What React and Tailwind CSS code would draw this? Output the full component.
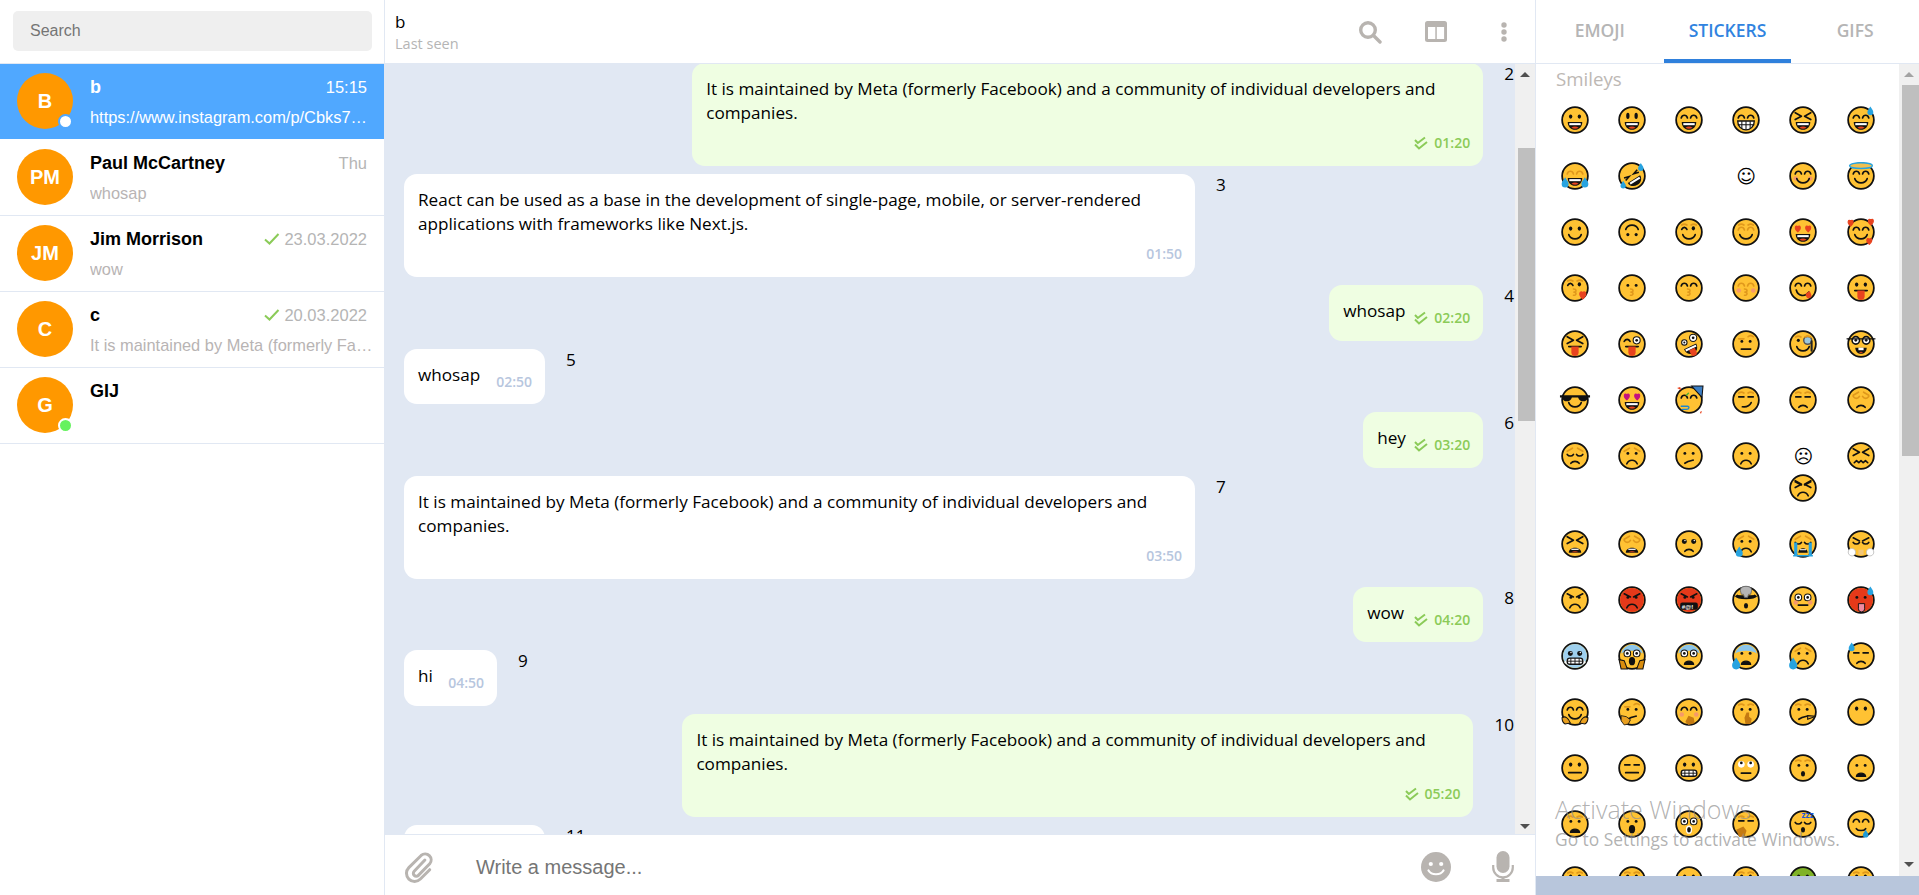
/**
 * Chat layout with sidebar, message list and sticker panel
 */

const L = (d, c = '#111', w = 1.6, fill = 'none') => (
  <path d={d} stroke={c} strokeWidth={w} fill={fill} strokeLinecap="round" strokeLinejoin="round" />
);
const AMBER = '#e0981c';
const RED = '#e8431f';
const BLUE = '#27a3e0';

const heart = (x, y, s = 1, c = RED) => (
  <path transform={`translate(${x} ${y}) scale(${s})`} d="M0 3C-4-.5-1.5-3.5 0-1.2 1.5-3.5 4-.5 0 3z" fill={c} stroke={c} strokeWidth="1" />
);
const drop = (x, y, s = 1, c = BLUE) => (
  <path transform={`translate(${x} ${y}) scale(${s})`} d="M0-4C1.5-1.5 2.6-.5 2.6 1A2.6 2.6 0 0 1-2.6 1C-2.6-.5-1.5-1.5 0-4z" fill={c} />
);

const PARTS = {
  dot: <><ellipse cx="9.3" cy="10.2" rx="1.6" ry="2" fill="#111" /><ellipse cx="17.7" cy="10.2" rx="1.6" ry="2" fill="#111" /></>,
  dotSmall: <><circle cx="9.5" cy="11" r="1.4" fill="#111" /><circle cx="17.5" cy="11" r="1.4" fill="#111" /></>,
  tall: <><ellipse cx="9.5" cy="9.5" rx="1.6" ry="3.1" fill="#111" /><ellipse cx="17.5" cy="9.5" rx="1.6" ry="3.1" fill="#111" /></>,
  arc: L('M6 11.5c1-3.4 5-3.4 6 0M15 11.5c1-3.4 5-3.4 6 0'),
  arcA: L('M6 11.5c1-3.4 5-3.4 6 0M15 11.5c1-3.4 5-3.4 6 0', AMBER),
  down: L('M6 10c1.5 2.6 4.5 2.6 6 0M15 10c1.5 2.6 4.5 2.6 6 0', AMBER),
  downB: L('M6 12c1.5 2 4.5 2 6 0M15 12c1.5 2 4.5 2 6 0'),
  x: L('M6 6.5l6 3.3-6 3.3M21 6.5l-6 3.3 6 3.3'),
  line: L('M6.5 10.5h5M15.5 10.5h5'),
  wink: <><ellipse cx="17.7" cy="10" rx="1.6" ry="2" fill="#111" />{L('M6.5 11c1.2-2.6 3.8-2.6 5 0')}</>,
  winkB: <><circle cx="18" cy="10" r="3.4" fill="#fff" stroke="#111" /><circle cx="18" cy="10" r="1.3" fill="#111" />{L('M6 11c1.4-2.6 4.2-2.6 5.6 0')}</>,
  wide: <><circle cx="9" cy="11" r="3.2" fill="#fff" stroke="#111" /><circle cx="18" cy="11" r="3.2" fill="#fff" stroke="#111" /><circle cx="9" cy="11" r="1.3" fill="#111" /><circle cx="18" cy="11" r="1.3" fill="#111" /></>,
  roll: <><circle cx="9" cy="10" r="3.2" fill="#fff" /><circle cx="18" cy="10" r="3.2" fill="#fff" /><circle cx="9" cy="8.6" r="1.3" fill="#111" /><circle cx="18" cy="8.6" r="1.3" fill="#111" /></>,
  big: <><circle cx="9" cy="11" r="2.4" fill="#111" /><circle cx="18" cy="11" r="2.4" fill="#111" /><circle cx="9.6" cy="10.2" r=".7" fill="#fff" /><circle cx="18.6" cy="10.2" r=".7" fill="#fff" /></>,
  heartEyes: <>{heart(8.5, 10, 1.1)}{heart(18.5, 10, 1.1)}</>,
  starEyes: <>{heart(8.5, 10, 1.1, '#c4127f')}{heart(18.5, 10, 1.1, '#c4127f')}</>,
  glasses: <><circle cx="8.5" cy="10" r="3.6" fill="#fff" stroke="#111" strokeWidth="1.5" /><circle cx="18.5" cy="10" r="3.6" fill="#fff" stroke="#111" strokeWidth="1.5" /><circle cx="8.5" cy="10" r="1.3" fill="#111" /><circle cx="18.5" cy="10" r="1.3" fill="#111" />{L('M0 8.5h27', '#111', 1.2)}</>,
  shades: <path d="M-1 9h29v2h-2c-1 5-8 5-9.5 0h-6c-1.500 5-8.500 5-9.500 0h-2z" fill="#111" />,
  mono: <><circle cx="18" cy="10" r="3.8" fill="#9cc8dc" stroke="#555" strokeWidth="1.4" /><circle cx="9" cy="10" r="1.5" fill="#111" />{L('M21.800 11v9', '#222', 2)}</>,

  open: <><path d="M6.500 15.500h14c0 4.500-3 7.500-7 7.500s-7-3-7-7.500z" fill="#111" /><path d="M8 16.500h11v2H8z" fill="#fff" /><path d="M10 21c2-1.500 5-1.500 7 0-2 1.200-5 1.200-7 0z" fill={RED} /></>,
  teeth: <><path d="M5.500 14.500h16c0 5-3.500 8.500-8 8.500s-8-3.500-8-8.500z" fill="#fff" stroke="#111" strokeWidth="1.3" />{L('M6 18h15M9.500 15v6.500M13.500 15v7.500M17.500 15v6.500', '#111', 1)}</>,
  grit: <><rect x="6" y="15.500" width="15" height="6" rx="2.500" fill="#fff" stroke="#111" strokeWidth="1.3" />{L('M6 18.500h15M9.500 16v5M13.500 16v5M17.500 16v5', '#111', .9)}</>,
  smile: L('M7.500 16c2 5.500 10 5.500 12 0'),
  smileS: L('M9 18c1.800 2.400 7.200 2.400 9 0'),
  smirk: L('M10 20c4 .5 7-1 8.500-4'),
  frown: L('M8.500 21c2-4.500 8-4.500 10 0'),
  frownS: L('M9.500 20.500c1.800-2.400 6.200-2.400 8 0'),
  flat: L('M9 18.500h9'),
  wide_flat: L('M7.500 18h12', '#111', 1.800),
  slant: L('M9.500 20.500c2.500-2 5.500-2.500 8-3'),
  wavy: L('M7 20l2.200-2 2.200 2 2.100-2 2.100 2 2.200-2 2.200 2'),
  o: <ellipse cx="13.500" cy="19" rx="2" ry="2.600" fill="#111" />,
  oBig: <ellipse cx="13.500" cy="18.500" rx="3" ry="4" fill="#111" />,
  oLips: <><ellipse cx="13.500" cy="19" rx="3" ry="4" fill="#fff" /><ellipse cx="13.500" cy="19" rx="1.800" ry="2.600" fill="#111" /></>,
  anguish: <path d="M9 21.500c1-4 8-4 9 0z" fill="#111" stroke="#111" strokeWidth="1.200" strokeLinejoin="round" />,
  cry: <><path d="M9 22c0-6 9-6 9 0z" fill="#111" /><path d="M10.500 18.500h6v1h-6z" fill="#fff" /></>,
  weary: <><path d="M7.500 22c0-6.500 12-6.500 12 0z" fill="#111" /><path d="M10 18h7v1.200h-7z" fill="#fff" /><path d="M10 21.500c2-1.400 5-1.400 7 0z" fill={RED} /></>,
  tongue: <><path d="M7.500 16h12" stroke="#111" strokeWidth="1.600" strokeLinecap="round" /><path d="M10 16h7v5.500a3.500 3.500 0 0 1-7 0z" fill={RED} /></>,
  lick: <>{L('M7 15.500c1.500 6 8.500 7 12 2')}<path d="M16 19l4-2.500 1.500 3.500a2.500 2.500 0 0 1-5 1.500z" fill={RED} /></>,
  kiss: L('M12 14.500c3.200 0 3.200 3 .5 3 2.700 0 2.700 3-.5 3', AMBER, 1.500),
  browA: L('M6.500 6.800c1.500-1 3.500-1 5 0M15.500 6.800c1.500-1 3.500-1 5 0', AMBER),
  sadBrow: L('M6 9l5-3M21 9l-5-3', AMBER),
  angry: L('M6 7.500l6 3M21 7.500l-6 3'),
  oneBrow: L('M6.500 8.500h5M15.500 6.500c1.500-1.500 4-1.500 5 0', AMBER),
  blush: <><circle cx="6.500" cy="16" r="2.200" fill="#f5996a" /><circle cx="20.500" cy="16" r="2.200" fill="#f5996a" /></>,
  sweat: drop(22.500, 5, 1.100),
  sweatL: drop(4.500, 5, 1.100),
  tears: <>{drop(4, 20, 1.300)}{drop(23, 20, 1.300)}</>,
  tearL: drop(7, 21, 1.300),
  tearBig: drop(4, 21, 1.500),
  streams: <path d="M5 12h3v13H5zM19 12h3v13h-3zM4 24h19v1.500H4z" fill={BLUE} />,
  halo: <ellipse cx="13.500" cy="3.500" rx="11" ry="2.800" fill="#f0c050" stroke={BLUE} strokeWidth="1.300" />,
  hearts3: <>{heart(3.500, 4.500, 1.100)}{heart(23, 3.500, 1.100)}{heart(21.500, 22, 1.100)}</>,
  kissHeart: heart(21, 20, 1.300),
  nerdTeeth: <><path d="M8 17h11c0 3.500-2.500 6-5.500 6S8 20.500 8 17z" fill="#111" /><path d="M11 17h5v2.500h-5z" fill="#fff" /><path d="M11.500 21.500c1.200-.8 2.800-.8 4 0-1.200 1-2.800 1-4 0z" fill={RED} /></>,
  hat: <><path d="M16 0l11 0-1 11z" fill="#3d7fc4" stroke="#111" strokeWidth="1" /><path d="M2 2l3-1 1 3zM24 25l2-1-1 3z" fill={RED} /></>,
  horn: <>{L('M6 19.500h6c2 0 2 3-1 3h-4', '#1f86d0', 1.300)}{L('M11 9l2-2', '#4caf2d', 1.300)}</>,
  red: <circle cx="13.500" cy="13.500" r="11.500" fill="#e5391a" />,
  blue: <circle cx="13.500" cy="13.500" r="11.500" fill="#9ed0ee" />,
  blueTop: <path d="M3 11a10.800 10.800 0 0 1 21 0c-6-3.500-15-3.500-21 0z" fill="#8cc6ea" />,
  snot: <path d="M3 20l4-5 1 8zM24 20l-4-5-1 8z" fill="#fff" />,
  hands: <path d="M1 17l5 1 3 8H3zM26 17l-5 1-3 8h6z" fill="#d98d0e" stroke="#111" strokeWidth="1" />,
  hug: <path d="M1 19c3-2 6 0 8 5l-5 1c-2-1-3-3-3-6zM26 19c-3-2-6 0-8 5l5 1c2-1 3-3 3-6z" fill="#e9a020" stroke="#111" strokeWidth="1" />,
  hand: <path d="M13 17l5 2 1 5-6 2-3-3z" fill="#c47a12" />,
  thinkHand: <path d="M3 17l5 1 4 3-2 4-4 1-3-4z" fill="#e9a020" stroke="#111" strokeWidth=".8" />,
  shush: <path d="M14 14h2.500v4l2.500 2-1 5h-5l-1-6z" fill="#c47a12" />,
  nose: <path d="M18 17l8 .5-8 3z" fill="#f0b030" stroke="#111" strokeWidth="1" />,
  yawnHand: <path d="M4 19l7-3 3 4-2 6H7z" fill="#c47a12" />,
  zzz: <text x="12" y="8" fontSize="8" fontWeight="700" fill="#1a56d6" fontFamily="Liberation Sans">zzz</text>,
  drool: drop(18, 23, 1, '#1f9ad6'),
  steam: <path d="M2 19c2-2 5-1 6 1 1 3-1 5-3 5-3 0-5-3-3-6zM25 19c-2-2-5-1-6 1-1 3 1 5 3 5 3 0 5-3 3-6z" fill="#fff" stroke="#bbb" strokeWidth=".8" />,
  steamM: <path d="M11 19h5v5h-5z" fill="#f3c77a" />,
  grawlix: <><rect x="5" y="16" width="17" height="7" rx="2" fill="#111" /><text x="6.500" y="22" fontSize="6" fontWeight="700" fill="#fff" fontFamily="Liberation Sans">#@!</text></>,
  burst: <><path d="M4 9c2 3 17 3 19 0" fill="#111" stroke="#111" strokeWidth="3" /><path d="M8 4c0-5 11-5 11 0l-1 4h-2l-1 3h-3l-1-3H9z" fill="#b5b5b5" stroke="#666" strokeWidth=".8" /></>,
  hotTongue: <path d="M11 17h6v5a3 3 0 0 1-6 0z" fill="#f08aa0" stroke="#111" strokeWidth=".9" />,
  rofl: <g transform="rotate(-32 13.500 13.500)"><path d="M6 11l5 1.500-5 1.500M21 11l-5 1.500 5 1.500" stroke="#111" strokeWidth="1.500" fill="none" /><path d="M6.500 17h14c0 4-3 6.500-7 6.500s-7-2.500-7-6.500z" fill="#111" /><path d="M8 17.800h11v2H8z" fill="#fff" /></g>,
  roflTears: <>{drop(5, 22, 1)}{drop(22, 5, 1)}</>,
  upside: <g transform="rotate(180 13.500 13.500)">{L('M7.500 16c2 5.500 10 5.500 12 0')}</g>,
  upsideEyes: <><circle cx="9.500" cy="16" r="1.500" fill="#111" /><circle cx="17.500" cy="16" r="1.500" fill="#111" /></>,
  zany: <g transform="rotate(-25 13.500 13.500)"><path d="M7 16h13c0 5-3 7.500-6.500 7.500S7 21 7 16z" fill="#111" /><path d="M8 16.800h11v2H8z" fill="#fff" /><path d="M11 19h6v4a3 3 0 0 1-6 0z" fill={RED} /></g>,
  zanyEyes: <><circle cx="9" cy="12" r="2.600" fill="#fff" stroke="#111" /><circle cx="17.500" cy="7.500" r="3.500" fill="#fff" stroke="#111" /><circle cx="9" cy="12" r="1" fill="#111" /><circle cx="17.500" cy="7.500" r="1.300" fill="#111" /></>,
};

// six per row, the way the panel lays them out; a string is a plain text glyph
const ROWS = [
  [['dot', 'open'], ['tall', 'open'], ['arc', 'open'], ['arc', 'teeth'], ['x', 'open'], ['arc', 'open', 'sweat']],
  [['arcA', 'open', 'tears'], ['rofl', 'roflTears'], null, '☺', ['arc', 'blush', 'smile'], ['halo', 'arc', 'smile']],
  [['dot', 'smile'], ['upsideEyes', 'upside'], ['browA', 'wink', 'smile'], ['arcA', 'browA', 'smile'], ['heartEyes', 'open'], ['arc', 'smile', 'hearts3']],
  [['browA', 'wink', 'kiss', 'kissHeart'], ['dotSmall', 'kiss'], ['arc', 'kiss'], ['arcA', 'blush', 'kiss'], ['arc', 'lick'], ['dot', 'tongue']],
  [['x', 'tongue'], ['winkB', 'tongue'], ['zanyEyes', 'zany'], ['oneBrow', 'dotSmall', 'flat'], ['mono', 'browA', 'smile'], ['glasses', 'nerdTeeth']],
  [['shades', 'smile'], ['starEyes', 'open'], ['arc', 'horn', 'hat'], ['browA', 'line', 'smirk'], ['line', 'browA', 'frownS'], ['sadBrow', 'down', 'frownS']],
  [['sadBrow', 'downB', 'frownS'], ['sadBrow', 'dotSmall', 'frown'], ['dotSmall', 'slant'], ['dotSmall', 'frown'], ['☹', ['x', 'angry', 'frown']], ['x', 'wavy']],
  [['x', 'weary'], ['sadBrow', 'down', 'weary'], ['big', 'frownS'], ['sadBrow', 'dotSmall', 'frown', 'tearL'], ['sadBrow', 'downB', 'cry', 'streams'], ['angry', 'downB', 'steam', 'steamM']],
  [['angry', 'dotSmall', 'frown'], ['red', 'angry', 'dotSmall', 'frown'], ['red', 'angry', 'dotSmall', 'grawlix'], ['burst', 'o'], ['wide', 'blush', 'flat'], ['red', 'dotSmall', 'hotTongue', 'sweat']],
  [['blue', 'big', 'snot', 'grit'], ['blueTop', 'wide', 'hands', 'oBig'], ['blueTop', 'wide', 'anguish'], ['blueTop', 'dotSmall', 'anguish', 'tearBig'], ['sadBrow', 'dotSmall', 'frown', 'tearBig'], ['line', 'frownS', 'sweatL']],
  [['arc', 'smile', 'hug'], ['oneBrow', 'dotSmall', 'slant', 'thinkHand'], ['arc', 'blush', 'hand'], ['browA', 'dotSmall', 'shush'], ['browA', 'dotSmall', 'slant', 'nose'], ['dot']],
  [['dot', 'wide_flat'], ['line', 'wide_flat'], ['dot', 'grit'], ['roll', 'flat'], ['browA', 'dotSmall', 'o'], ['dotSmall', 'anguish']],
  [['browA', 'dotSmall', 'anguish'], ['dotSmall', 'oBig'], ['wide', 'oLips'], ['line', 'browA', 'yawnHand'], ['downB', 'o', 'zzz'], ['arc', 'smileS', 'drool']],
  [['browA', 'dot'], ['browA', 'dot'], ['dot'], ['browA', 'dot'], ['green', 'dot'], ['browA', 'dot']],
];

function Face({ parts }) {
  const green = parts.includes('green');
  return (
    <svg width="28" height="28" viewBox="0 0 27 27" className="overflow-visible">
      <circle cx="13.5" cy="13.5" r="12.4" fill={green ? '#7fb226' : '#ffc233'} stroke="#111" strokeWidth="1.7" />
      {parts.filter((p) => p !== 'green').map((p) => (
        <g key={p}>{PARTS[p]}</g>
      ))}
    </svg>
  );
}

function Sticker({ item }) {
  if (item === null) return <div className="h-8" />;
  if (typeof item === 'string') {
    return (
      <div className="h-8 flex items-center justify-center text-[19px] leading-none text-black font-['DejaVu_Sans',sans-serif]">
        {item}
      </div>
    );
  }
  return (
    <div className="h-8 flex items-center justify-center">
      <Face parts={item} />
    </div>
  );
}

function isDouble(cell) {
  return Array.isArray(cell) && typeof cell[0] === 'string' && cell[0] === '☹';
}

function StickerGrid() {
  return (
    <div className="grid grid-cols-[repeat(6,57.2px)] pl-[10px]">
      {ROWS.flat().map((cell, i) => (
        <div key={i} className="py-3 flex flex-col items-stretch">
          {isDouble(cell) ? (
            <>
              <Sticker item={cell[0]} />
              <Sticker item={cell[1]} />
            </>
          ) : (
            <Sticker item={cell} />
          )}
        </div>
      ))}
    </div>
  );
}

function Arrow({ down, color }) {
  return (
    <svg width="10" height="5" viewBox="0 0 10 5" className="block">
      <path d={down ? 'M0 0h10L5 5z' : 'M5 0l5 5H0z'} fill={color} />
    </svg>
  );
}

function ScrollTrack({ thumbTop, thumbHeight, upColor, bottomPad }) {
  return (
    <div className="w-5 shrink-0 bg-[#f0f0f0] flex flex-col items-center">
      <div className="h-[21px] shrink-0 flex items-center justify-center">
        <Arrow color={upColor} />
      </div>
      <div className="ml-[3px] mr-[1px] w-[17px] bg-[#bfbfbf] shrink-0" style={{ marginTop: thumbTop, height: thumbHeight }} />
      <div className="mt-auto flex justify-center" style={{ paddingBottom: bottomPad }}>
        <Arrow down color="#505050" />
      </div>
    </div>
  );
}

function DoubleCheck({ color = '#8bcb58' }) {
  return (
    <svg width="14" height="14" viewBox="0 0 14 14" fill="none" stroke={color} strokeWidth="2">
      <path d="M1 4l2.800 3L11 1.500" />
      <path d="M1 8.500L5 12.500 13 6" />
    </svg>
  );
}

function Check() {
  return (
    <svg width="16" height="12" viewBox="0 0 16 12" fill="none" stroke="#8bcb58" strokeWidth="2">
      <path d="M1 6.500L5.500 10.500 14.500 1" />
    </svg>
  );
}

function Time({ value, mine }) {
  return (
    <span className={`flex items-center gap-1.5 text-[14px] leading-5 font-semibold ${mine ? 'text-[#8bcb58]' : 'text-[#b7c6de]'}`}>
      {mine && <DoubleCheck />}
      {value}
    </span>
  );
}

const MESSAGES = [
  { n: 2, mine: true, long: 'It is maintained by Meta (formerly Facebook) and a community of individual developers and companies.', time: '01:20' },
  { n: 3, long: 'React can be used as a base in the development of single-page, mobile, or server-rendered applications with frameworks like Next.js.', time: '01:50' },
  { n: 4, mine: true, short: 'whosap', time: '02:20', w: 'w-[154px]' },
  { n: 5, short: 'whosap', time: '02:50', w: 'w-[141px]' },
  { n: 6, mine: true, short: 'hey', time: '03:20', w: 'w-[120px]' },
  { n: 7, long: 'It is maintained by Meta (formerly Facebook) and a community of individual developers and companies.', time: '03:50' },
  { n: 8, mine: true, short: 'wow', time: '04:20', w: 'w-[130px]' },
  { n: 9, short: 'hi', time: '04:50', w: 'w-[93px]' },
  { n: 10, mine: true, long: 'It is maintained by Meta (formerly Facebook) and a community of individual developers and companies.', time: '05:20' },
  { n: 11, short: 'whosap', time: '05:50', w: 'w-[141px]' },
];

function Message({ msg }) {
  const bg = msg.mine ? 'bg-[#effee2]' : 'bg-white';
  return (
    <div className={`flex shrink-0 text-[17.15px] leading-6 text-black ${msg.mine ? 'justify-end pr-px' : 'pl-5'}`}>
      {msg.long ? (
        <div className={`${bg} w-[791px] h-[103px] rounded-[13px] pl-[14px] pr-[13px] pt-[14px] pb-[13px] flex flex-col`}>
          <p>{msg.long}</p>
          <div className="mt-auto flex justify-end">
            <Time value={msg.time} mine={msg.mine} />
          </div>
        </div>
      ) : (
        <div className={`${bg} ${msg.w} h-[55.5px] rounded-[13px] pl-[14px] pr-[13px] pt-[14px] flex justify-between`}>
          <span>{msg.short}</span>
          <span className="mt-[9px]">
            <Time value={msg.time} mine={msg.mine} />
          </span>
        </div>
      )}
      <span className="ml-[21px] -mt-px">{msg.n}</span>
    </div>
  );
}

const CHATS = [
  { initials: 'B', name: 'b', time: '15:15', text: 'https://www.instagram.com/p/Cbks7MkAaHv/?utm_source=ig_web', active: true, dot: 'self' },
  { initials: 'PM', name: 'Paul McCartney', time: 'Thu', text: 'whosap' },
  { initials: 'JM', name: 'Jim Morrison', time: '23.03.2022', text: 'wow', sent: true },
  { initials: 'C', name: 'c', time: '20.03.2022', text: 'It is maintained by Meta (formerly Facebook) and a community', sent: true },
  { initials: 'G', name: 'GIJ', time: '', text: '', dot: 'online' },
];

function ChatRow({ chat }) {
  const active = chat.active;
  return (
    <div className={`h-[76px] flex pl-[17px] pt-[9px] border-b shrink-0 ${active ? 'bg-[#50a8ff] border-white' : 'bg-white border-[#e1e8f3]'}`}>
      <div className="relative w-14 h-14 rounded-full bg-[#ff9800] flex items-center justify-center text-white font-bold text-[20px] shrink-0">
        {chat.initials}
        {chat.dot && (
          <span className={`absolute right-0 bottom-0 w-[15px] h-[15px] rounded-full border-2 ${chat.dot === 'self' ? 'bg-white border-[#50a8ff]' : 'bg-[#66f25f] border-white'}`} />
        )}
      </div>
      <div className="ml-[17px] min-w-0 w-[288px]">
        <div className="flex items-center justify-between pr-[11px] h-7">
          <span className={`font-bold text-[18px] ${active ? 'text-white' : 'text-black'}`}>{chat.name}</span>
          <span className={`flex items-center gap-[4px] text-[16.5px] ${active ? 'text-white' : 'text-[#b5b5b5]'}`}>
            {chat.sent && <Check />}
            {chat.time}
          </span>
        </div>
        <div className={`mt-[4px] text-[16.4px] leading-6 truncate ${active ? 'text-white' : 'text-[#b8b4b4]'}`}>{chat.text}</div>
      </div>
    </div>
  );
}

export default function App() {
  return (
    <div className="relative h-screen w-full flex overflow-hidden bg-white font-['Liberation_Sans',sans-serif]">
      {/* Chats */}
      <aside className="w-[384px] shrink-0 flex flex-col">
        <div className="h-16 shrink-0 pl-[13px] pr-[12px] pt-[11px] border-b border-[#e1e8f3]">
          <div className="h-[40px] rounded-[5px] bg-[#efefef] pl-[17px] flex items-center text-[16px] text-[#757575]">Search</div>
        </div>
        {CHATS.map((chat) => (
          <ChatRow key={chat.initials} chat={chat} />
        ))}
      </aside>

      {/* Conversation */}
      <main className="w-[1152px] shrink-0 flex flex-col font-['Open_Sans',sans-serif]">
        <header className="h-16 shrink-0 border-l border-r border-b border-[#e1e8f3] flex items-center pl-[10px]">
          <div>
            <div className="text-[17px] leading-6 font-medium text-black">b</div>
            <div className="text-[14.5px] leading-5 text-[#b5b5b5]">Last seen</div>
          </div>
          <div className="ml-auto flex items-center">
            <svg width="24" height="24" viewBox="0 0 24 24" fill="none" stroke="#b8b4b0" strokeWidth="3.4" strokeLinecap="round" className="mr-[43px]">
              <circle cx="10" cy="10" r="7.300" />
              <path d="M16 16l6 6" />
            </svg>
            <svg width="22" height="21" viewBox="0 0 22 21" className="mr-[54px]">
              <rect width="22" height="21" rx="2.500" fill="#b8b4b0" />
              <rect x="3" y="6" width="7.300" height="12" fill="#fff" />
              <rect x="11.800" y="6" width="7.300" height="12" fill="#fff" />
            </svg>
            <svg width="6" height="20" viewBox="0 0 6 20" fill="#b8b4b0" className="mr-[28px]">
              <circle cx="3" cy="3" r="2.700" />
              <circle cx="3" cy="10" r="2.700" />
              <circle cx="3" cy="17" r="2.700" />
            </svg>
          </div>
        </header>

        <div className="flex-1 min-h-0 flex bg-[#e1e8f3] pr-px">
          <div className="flex-1 min-w-0 overflow-hidden">
            <div className="-mt-px flex flex-col gap-2">
              {MESSAGES.map((msg) => (
                <Message key={msg.n} msg={msg} />
              ))}
            </div>
          </div>
          <ScrollTrack thumbTop={63} thumbHeight={273} upColor="#505050" bottomPad={5} />
        </div>

        <footer className="h-[61px] shrink-0 bg-white border-l border-r border-t border-[#e1e8f3] flex items-center pl-[19px] pt-[3px] font-['Liberation_Sans',sans-serif]">
          <svg width="30" height="33" viewBox="0 0 28 30" fill="none" stroke="#b8b4b0" strokeWidth="2.800" strokeLinecap="round" strokeLinejoin="round">
            <path d="M19.500 9L9.500 19.500a2.700 2.700 0 0 0 3.900 3.800L24 12.500a5.600 5.600 0 0 0-8-7.800L4.500 16a7.600 7.600 0 0 0 10.800 10.700L24 18" />
          </svg>
          <span className="ml-[42px] text-[20px] text-[#757575]">Write a message...</span>
          <svg width="30" height="30" viewBox="0 0 30 30" className="ml-auto">
            <circle cx="15" cy="15" r="15" fill="#b8b4b0" />
            <circle cx="9.800" cy="12" r="2.100" fill="#fff" />
            <circle cx="20.200" cy="12" r="2.100" fill="#fff" />
            <path d="M7.500 18.500c3 5 12 5 15 0" stroke="#fff" strokeWidth="2.200" fill="none" strokeLinecap="round" />
          </svg>
          <svg width="22" height="31" viewBox="0 0 22 31" className="ml-[41px] mr-[21px]" fill="none">
            <rect x="4.500" y="0" width="13" height="22" rx="6.500" fill="#b8b4b0" />
            <path d="M1.200 14v2.500a9.800 9.800 0 0 0 19.600 0V14" stroke="#b8b4b0" strokeWidth="2.200" />
            <path d="M11 26v3" stroke="#b8b4b0" strokeWidth="3" />
            <path d="M4.500 29.500h13" stroke="#b8b4b0" strokeWidth="3" />
          </svg>
        </footer>
      </main>

      {/* Emoji panel */}
      <section className="flex-1 min-w-0 flex flex-col font-['Open_Sans',sans-serif]">
        <div className="h-16 shrink-0 border-b border-[#e1e8f3] grid grid-cols-3 text-[17.5px] font-semibold text-[#b5b5b5]">
          <button className="flex items-center justify-center pb-[2px]">EMOJI</button>
          <button className="flex items-center justify-center pb-[2px] pt-[3px] text-[#3083e0] border-b-[4px] border-[#2f80dc]">STICKERS</button>
          <button className="flex items-center justify-center pb-[2px]">GIFS</button>
        </div>
        <div className="flex-1 min-h-0 flex">
          <div className="flex-1 min-w-0 overflow-hidden">
            <div className="pl-5 h-[28px] text-[18.7px] leading-[30px] text-[#bdb8b4]">Smileys</div>
            <StickerGrid />
          </div>
          <ScrollTrack thumbTop={0} thumbHeight={371} upColor="#a3a3a3" bottomPad={9} />
        </div>
        <div className="h-[19px] shrink-0 bg-[#b8c6dc]" />
      </section>

      {/* Windows watermark */}
      <div className="absolute left-[1555px] top-[792px] pointer-events-none font-['Open_Sans',sans-serif] text-[#8f8f8f]/70">
        <div className="text-[25px] leading-[34px] font-light">Activate Windows</div>
        <div className="text-[17.4px] leading-[26px]">Go to Settings to activate Windows.</div>
      </div>
    </div>
  );
}
